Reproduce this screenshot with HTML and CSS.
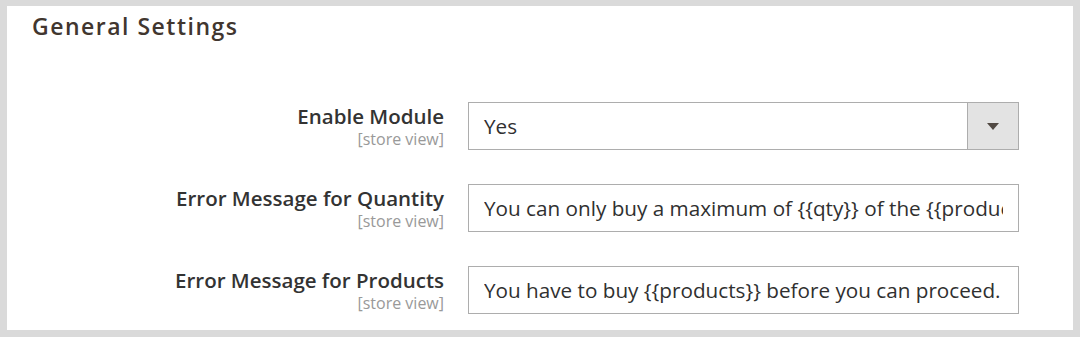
FILE: index.html
```html
<!DOCTYPE html>
<html lang="en">
<head>
    <meta charset="UTF-8">
    <title>General Settings</title>
    <link rel="stylesheet" href="styles.css">
</head>
<body>

<!-- Settings panel -->
<div class="panel">
    <h2 class="panel-title">General Settings</h2>

    <div class="fields">
        <div class="field">
            <div class="field-label">
                <label for="enable">Enable Module</label>
                <span class="scope">[store view]</span>
            </div>
            <div class="select-box">
                <span class="select-value" id="enable">Yes</span>
                <span class="select-arrow"><span class="triangle"></span></span>
            </div>
        </div>

        <div class="field">
            <div class="field-label">
                <label for="qty">Error Message for Quantity</label>
                <span class="scope">[store view]</span>
            </div>
            <input type="text" class="text-input" id="qty" value="You can only buy a maximum of {{qty}} of the {{products}}.">
        </div>

        <div class="field">
            <div class="field-label">
                <label for="products">Error Message for Products</label>
                <span class="scope">[store view]</span>
            </div>
            <input type="text" class="text-input" id="products" value="You have to buy {{products}} before you can proceed.">
        </div>
    </div>
</div>

</body>
</html>
```

FILE: styles.css
```css
body {
    margin: 0;
    padding: 6px 7px 7px 7px;
    background-color: #dadada;
    font-family: "Open Sans", Arial, sans-serif;
    color: #303030;
}
.panel {
    background-color: #fff;
    height: 324px;
    padding: 8px 54px 0 25px;
    box-sizing: border-box;
}
.panel-title {
    margin: 0;
    font-size: 23px;
    font-weight: 600;
    letter-spacing: 1.5px;
    color: #41362f;
    line-height: 24px;
}
.fields {
    margin-top: 64px;
    display: flex;
    flex-direction: column;
    gap: 34px;
}
.field {
    display: grid;
    grid-template-columns: 412px 1fr;
    column-gap: 24px;
}
.field-label {
    display: flex;
    flex-direction: column;
    align-items: flex-end;
    padding-top: 2px;
}
.field-label label {
    font-size: 20.5px;
    font-weight: 600;
    line-height: 24px;
    color: #333;
}
.scope {
    font-size: 16px;
    color: #999;
    line-height: 22px;
}
.select-box {
    display: flex;
    height: 48px;
    border: 1px solid #adadad;
    box-sizing: border-box;
}
.select-value {
    flex: 1;
    padding-left: 15px;
    font-size: 20.7px;
    line-height: 46px;
}
.select-arrow {
    width: 50px;
    background-color: #e3e3e3;
    border-left: 1px solid #adadad;
    display: flex;
    align-items: center;
    justify-content: center;
}
.triangle {
    width: 0;
    height: 0;
    border-left: 6px solid transparent;
    border-right: 6px solid transparent;
    border-top: 7px solid #514943;
}
.text-input {
    height: 48px;
    box-sizing: border-box;
    border: 1px solid #adadad;
    padding: 0 15px;
    font-family: "Open Sans", Arial, sans-serif;
    font-size: 20.7px;
    color: #303030;
    width: 100%;
    margin: 0;
}
```
